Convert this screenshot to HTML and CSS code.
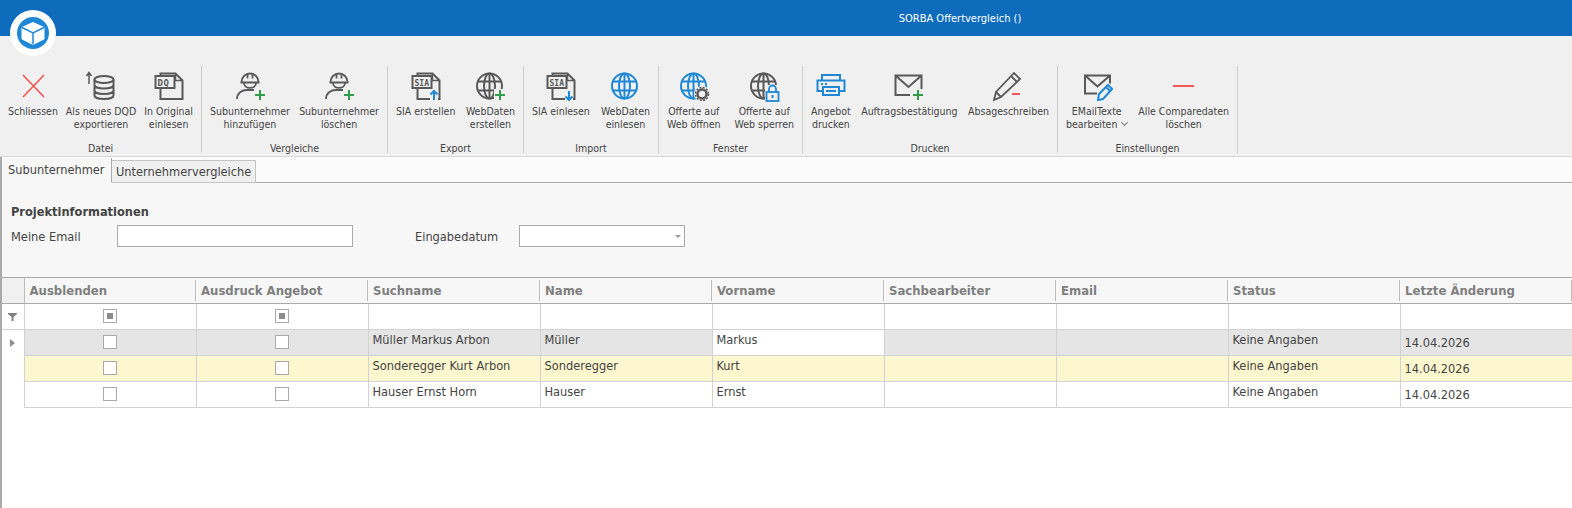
FILE: index.html
```html
<!DOCTYPE html>
<html lang="en">
<head>
    <meta charset="UTF-8">
    <meta name="viewport" content="width=device-width, initial-scale=1.0">
    <title>SORBA Offertvergleich</title>
    <link rel="stylesheet" href="styles.css">
</head>
<body>
    <svg class="defs" width="0" height="0">
        <symbol id="globe" viewBox="0 0 32 32">
            <g fill="none" stroke="currentColor" stroke-width="2">
                <circle cx="15.500" cy="16" r="12.500"/>
                <ellipse cx="15.500" cy="16" rx="5.500" ry="12.500"/>
                <path d="M15.500 3.500v25M4 11.500h23M4 20.500h23"/>
            </g>
        </symbol>
        <symbol id="doc" viewBox="0 0 32 32">
            <path d="M7.500 5V3.500h15l7 7V29h-22V18" fill="none" stroke="#595959" stroke-width="2"/>
            <path d="M22.500 3.500v7h7" fill="none" stroke="#595959" stroke-width="1.500"/>
            <rect x="2.500" y="6" width="19" height="12" fill="#f0f0f0" stroke="#595959" stroke-width="2"/>
        </symbol>
        <symbol id="worker" viewBox="0 0 32 32">
            <g fill="none" stroke="#595959" stroke-width="1.800">
                <path d="M7.500 12a8.500 8.500 0 0 1 17 0"/>
                <path d="M6.500 12.500h19M10 13c0 6.500 12 6.500 12 0M13.500 3.500v5M18.500 3.500v5"/>
                <path d="M3 29c0-6 5-9 10-9h7"/>
            </g>
        </symbol>
        <symbol id="plus" viewBox="0 0 10 10">
            <path d="M5 0v10M0 5h10" stroke="#2e9e4a" stroke-width="2"/>
        </symbol>
    </svg>

    <header class="titlebar">
        <span>SORBA Offertvergleich ()</span>
    </header>
    <div class="logo">
        <svg viewBox="0 0 46 46" width="46" height="46">
            <circle cx="23" cy="23" r="23" fill="#fff"/>
            <circle cx="23" cy="23" r="16" fill="#1e88d6"/>
            <path d="M23 12.500l11 5v11.500l-11 5.500-11-5.500V17.500z" fill="#fff" stroke="#fff" stroke-linejoin="round"/>
            <path d="M12 17.500l11 5.500 11-5.500M23 23v11.500" fill="none" stroke="#1e88d6" stroke-width="1.500"/>
        </svg>
    </div>

    <section class="ribbon">
        <div class="group g-datei">
            <div class="buttons">
                <div class="btn">
                    <svg class="ico" viewBox="0 0 32 32"><path d="M6 5l21 22M27 5L6 27" stroke="#f25555" stroke-width="1.600" fill="none"/></svg>
                    <span>Schliessen</span>
                </div>
                <div class="btn">
                    <svg class="ico" viewBox="0 0 32 32">
                        <g fill="none" stroke="#595959" stroke-width="2">
                            <ellipse cx="19" cy="9.500" rx="9.500" ry="3.500"/>
                            <path d="M9.500 9.500v16c0 2 4 3.500 9.500 3.500s9.500-1.500 9.500-3.500v-16M9.500 15c0 2 4 3.500 9.500 3.500s9.500-1.500 9.500-3.500M9.500 20.500c0 2 4 3.500 9.500 3.500s9.500-1.500 9.500-3.500"/>
                        </g>
                        <path d="M4 14V3M1.500 6L4 2.500 6.500 6" fill="none" stroke="#595959" stroke-width="1.500"/>
                    </svg>
                    <span>Als neues DQD<br>exportieren</span>
                </div>
                <div class="btn">
                    <svg class="ico" viewBox="0 0 32 32">
                        <use href="#doc"/>
                        <text x="4.500" y="15.500" class="ico-text dq">DQ</text>
                    </svg>
                    <span>In Original<br>einlesen</span>
                </div>
            </div>
            <div class="group-label">Datei</div>
        </div>

        <div class="group g-vergleiche">
            <div class="buttons">
                <div class="btn">
                    <svg class="ico" viewBox="0 0 32 32">
                        <use href="#worker"/>
                        <use href="#plus" x="21" y="20" width="10" height="10"/>
                    </svg>
                    <span>Subunternehmer<br>hinzufügen</span>
                </div>
                <div class="btn">
                    <svg class="ico" viewBox="0 0 32 32">
                        <use href="#worker"/>
                        <use href="#plus" x="21" y="20" width="10" height="10"/>
                    </svg>
                    <span>Subunternehmer<br>löschen</span>
                </div>
            </div>
            <div class="group-label">Vergleiche</div>
        </div>

        <div class="group g-export">
            <div class="buttons">
                <div class="btn">
                    <svg class="ico" viewBox="0 0 32 32">
                        <use href="#doc"/>
                        <text x="4.500" y="15.500" class="ico-text">SIA</text>
                        <rect x="20" y="20" width="8" height="11" fill="#f0f0f0"/>
                        <path d="M24 30v-9M20.500 24.500L24 21l3.500 3.500" fill="none" stroke="#1e88d6" stroke-width="2"/>
                    </svg>
                    <span>SIA erstellen</span>
                </div>
                <div class="btn">
                    <svg class="ico ico-grey" viewBox="0 0 32 32">
                        <use href="#globe"/>
                        <rect x="20" y="19" width="12" height="12" fill="#f0f0f0"/>
                        <use href="#plus" x="21" y="20" width="10" height="10"/>
                    </svg>
                    <span>WebDaten<br>erstellen</span>
                </div>
            </div>
            <div class="group-label">Export</div>
        </div>

        <div class="group g-import">
            <div class="buttons">
                <div class="btn">
                    <svg class="ico" viewBox="0 0 32 32">
                        <use href="#doc"/>
                        <text x="4.500" y="15.500" class="ico-text">SIA</text>
                        <rect x="20" y="20" width="8" height="11" fill="#f0f0f0"/>
                        <path d="M24 21v9M20.500 26.500L24 30l3.500-3.500" fill="none" stroke="#1e88d6" stroke-width="2"/>
                    </svg>
                    <span>SIA einlesen</span>
                </div>
                <div class="btn">
                    <svg class="ico ico-blue" viewBox="0 0 32 32"><use href="#globe"/></svg>
                    <span>WebDaten<br>einlesen</span>
                </div>
            </div>
            <div class="group-label">Import</div>
        </div>

        <div class="group g-fenster">
            <div class="buttons">
                <div class="btn">
                    <svg class="ico ico-blue" viewBox="0 0 32 32">
                        <use href="#globe"/>
                        <circle cx="24" cy="24" r="8" fill="#f0f0f0"/>
                        <circle cx="24" cy="24" r="4.500" fill="none" stroke="#595959" stroke-width="2.500"/>
                        <circle cx="24" cy="24" r="6.500" fill="none" stroke="#595959" stroke-width="1.500" stroke-dasharray="2 1.400"/>
                    </svg>
                    <span>Offerte auf<br>Web öffnen</span>
                </div>
                <div class="btn">
                    <svg class="ico ico-grey" viewBox="0 0 32 32">
                        <use href="#globe"/>
                        <rect x="17" y="15" width="15" height="17" fill="#f0f0f0"/>
                        <path d="M21 22v-3a3.500 3.500 0 0 1 7 0v3" fill="none" stroke="#1e88d6" stroke-width="1.800"/>
                        <rect x="18.500" y="22" width="12" height="9" fill="none" stroke="#1e88d6" stroke-width="1.800"/>
                        <path d="M24.500 25v3" stroke="#1e88d6" stroke-width="2"/>
                    </svg>
                    <span>Offerte auf<br>Web sperren</span>
                </div>
            </div>
            <div class="group-label">Fenster</div>
        </div>

        <div class="group g-drucken">
            <div class="buttons">
                <div class="btn">
                    <svg class="ico" viewBox="0 0 32 32">
                        <g fill="none" stroke="#1e88d6" stroke-width="2">
                            <path d="M7 10V5h18v5"/>
                            <path d="M8 21H2.500V10.500h27V21H24"/>
                            <rect x="8" y="17" width="16" height="8"/>
                            <path d="M11 21h10"/>
                        </g>
                        <path d="M6 14h2M10 14h2" stroke="#1e88d6" stroke-width="2"/>
                    </svg>
                    <span>Angebot<br>drucken</span>
                </div>
                <div class="btn">
                    <svg class="ico" viewBox="0 0 32 32">
                        <path d="M17 25H2.500V5.500h26V19M2.500 5.500l13 11.500 13-11.500" fill="none" stroke="#595959" stroke-width="2"/>
                        <use href="#plus" x="20" y="20" width="10" height="10"/>
                    </svg>
                    <span>Auftragsbestätigung</span>
                </div>
                <div class="btn">
                    <svg class="ico" viewBox="0 0 32 32">
                        <path d="M2 30l2-8L22 3l6 6L9 27zM4 22l5 5M19 6l6 6" fill="none" stroke="#595959" stroke-width="1.800"/>
                        <path d="M20 24h8" stroke="#f25555" stroke-width="2"/>
                    </svg>
                    <span>Absageschreiben</span>
                </div>
            </div>
            <div class="group-label">Drucken</div>
        </div>

        <div class="group g-einstellungen">
            <div class="buttons">
                <div class="btn">
                    <svg class="ico" viewBox="0 0 32 32">
                        <path d="M16 23.500H4V5.500h25v8M4 5.500l12.500 11L29 5.500" fill="none" stroke="#595959" stroke-width="2"/>
                        <path d="M17 30l1-6L27 15l4 4-9 10zM25 17l4 4" fill="#f0f0f0" stroke="#1e88d6" stroke-width="2"/>
                    </svg>
                    <span>EMailTexte<br>bearbeiten <i class="chev"></i></span>
                </div>
                <div class="btn">
                    <svg class="ico" viewBox="0 0 32 32"><path d="M5 16h21" stroke="#f25555" stroke-width="2"/></svg>
                    <span>Alle Comparedaten<br>löschen</span>
                </div>
            </div>
            <div class="group-label">Einstellungen</div>
        </div>
    </section>

    <main class="content">
        <nav class="tabs">
            <div class="tab active">Subunternehmer</div>
            <div class="tab">Unternehmervergleiche</div>
        </nav>

        <section class="project">
            <h4>Projektinformationen</h4>
            <div class="fields">
                <label class="lbl-mail">Meine Email</label>
                <div class="input mail"></div>
                <label class="lbl-date">Eingabedatum</label>
                <div class="input date"><i class="caret"></i></div>
            </div>
        </section>

        <table class="grid">
            <thead>
                <tr>
                    <th class="gutter"></th>
                    <th>Ausblenden</th>
                    <th>Ausdruck Angebot</th>
                    <th>Suchname</th>
                    <th>Name</th>
                    <th>Vorname</th>
                    <th>Sachbearbeiter</th>
                    <th>Email</th>
                    <th>Status</th>
                    <th>Letzte Änderung</th>
                </tr>
            </thead>
            <tbody>
                <tr class="filter">
                    <td class="gutter"><svg width="9" height="8" viewBox="0 0 9 8"><path d="M0 0h9v1L5.500 4v4h-2V4L0 1z" fill="#808080"/></svg></td>
                    <td class="chk"><span class="box mixed"></span></td>
                    <td class="chk"><span class="box mixed"></span></td>
                    <td></td><td></td><td></td><td></td><td></td><td></td><td></td>
                </tr>
                <tr class="selected">
                    <td class="gutter"><i class="row-arrow"></i></td>
                    <td class="chk"><span class="box"></span></td>
                    <td class="chk"><span class="box"></span></td>
                    <td>Müller Markus Arbon</td>
                    <td>Müller</td>
                    <td class="focus">Markus</td>
                    <td></td><td></td>
                    <td>Keine Angaben</td>
                    <td class="date-cell">14.04.2026</td>
                </tr>
                <tr class="marked">
                    <td class="gutter"></td>
                    <td class="chk"><span class="box"></span></td>
                    <td class="chk"><span class="box"></span></td>
                    <td>Sonderegger Kurt Arbon</td>
                    <td>Sonderegger</td>
                    <td>Kurt</td>
                    <td></td><td></td>
                    <td>Keine Angaben</td>
                    <td class="date-cell">14.04.2026</td>
                </tr>
                <tr>
                    <td class="gutter"></td>
                    <td class="chk"><span class="box"></span></td>
                    <td class="chk"><span class="box"></span></td>
                    <td>Hauser Ernst Horn</td>
                    <td>Hauser</td>
                    <td>Ernst</td>
                    <td></td><td></td>
                    <td>Keine Angaben</td>
                    <td class="date-cell">14.04.2026</td>
                </tr>
            </tbody>
        </table>
    </main>
</body>
</html>
```
FILE: styles.css
```css
html, body {
    margin: 0;
    height: 508px;
    overflow: hidden;
    background-color: #fff;
    font-family: "DejaVu Sans Condensed", "DejaVu Sans", sans-serif;
    color: #444;
}
.defs {
    position: absolute;
}
.titlebar {
    height: 36px;
    background-color: #0f6cbd;
    color: #fff;
    font-size: 11px;
    display: flex;
    align-items: center;
    justify-content: center;
    padding-left: 348px;
    box-sizing: border-box;
}
.logo {
    position: absolute;
    top: 10px;
    left: 10px;
    width: 46px;
    height: 46px;
}
.ribbon {
    height: 121px;
    background-color: #f0f0f0;
    border-bottom: 1px solid #d8d8d8;
    box-sizing: border-box;
    display: flex;
    padding-top: 30px;
    font-size: 10.5px;
}
.group {
    border-right: 1px solid #cfcfcf;
    display: flex;
    flex-direction: column;
    height: 87px;
    box-sizing: border-box;
    padding: 0 8px;
}
.g-datei { width: 202px; }
.g-vergleiche { width: 186px; }
.g-export { width: 136px; }
.g-import { width: 135px; }
.g-fenster { width: 144px; }
.g-drucken { width: 255px; }
.g-einstellungen { width: 180px; }
.buttons {
    display: flex;
    justify-content: space-between;
    flex: 1;
}
.btn {
    display: flex;
    flex-direction: column;
    align-items: center;
    text-align: center;
    line-height: 13px;
    white-space: nowrap;
    color: #444;
}
.ico {
    width: 32px;
    height: 32px;
    margin: 4px 0 3px;
    display: block;
}
.ico-grey { color: #595959; }
.ico-blue { color: #1e88d6; }
.ico-text {
    font-family: "DejaVu Sans Mono", monospace;
    font-size: 8px;
    font-weight: bold;
    fill: #595959;
}
.dq {
    font-size: 9px;
    letter-spacing: 0.5px;
}
.chev {
    display: inline-block;
    width: 4px;
    height: 4px;
    margin: 0 0 3px 2px;
    border-right: 1px solid #777;
    border-bottom: 1px solid #777;
    transform: rotate(45deg);
}
.group-label {
    text-align: center;
    line-height: 13px;
    margin-bottom: -2px;
}
.content {
    border-left: 2px solid #aaa;
    height: 351px;
    box-sizing: border-box;
}
.tabs {
    height: 26px;
    display: flex;
    align-items: flex-end;
    border-bottom: 1px solid #aaa;
    box-sizing: border-box;
    font-size: 12.700px;
    background-color: #fbfbfb;
}
.tab {
    height: 23px;
    line-height: 22px;
    padding: 0 4px;
    margin-bottom: -1px;
    border: 1px solid #c4c4c4;
    border-left: none;
    box-sizing: border-box;
    background-color: #f0f0f0;
}
.tab.active {
    height: 25px;
    width: 110px;
    padding-left: 6px;
    background-color: #f7f7f7;
    border-top: none;
    border-color: #aaa;
    border-bottom-color: #f7f7f7;
    position: relative;
    line-height: 24px;
}
.project {
    height: 94px;
    background-color: #f7f7f7;
    padding: 22px 0 0 9px;
    box-sizing: border-box;
    font-size: 12.700px;
}
.project h4 {
    margin: 0 0 6px;
    font-size: 12.700px;
    line-height: 14px;
    color: #444;
}
.fields {
    display: flex;
    align-items: center;
}
.lbl-mail { width: 106px; }
.lbl-date { width: 104px; }
.input {
    height: 22px;
    background-color: #fff;
    border: 1px solid #aaa;
    box-sizing: border-box;
    display: flex;
    align-items: center;
    justify-content: flex-end;
}
.mail {
    width: 236px;
    margin-right: 62px;
}
.date { width: 166px; }
.caret {
    margin-right: 3px;
    border: 3px solid transparent;
    border-top: 3px solid #999;
    border-bottom: none;
}
.grid {
    border-collapse: collapse;
    table-layout: fixed;
    width: 1570px;
    font-size: 12.700px;
}
.grid th, .grid td {
    width: 172px;
    box-sizing: border-box;
    overflow: hidden;
    white-space: nowrap;
    text-align: left;
    padding: 0 5px;
}
.grid th {
    height: 26px;
    background-color: #f7f7f7;
    border-top: 1px solid #aaa;
    border-bottom: 1px solid #aaa;
    color: #7f7f7f;
    font-size: 13px;
    font-weight: bold;
    background-image: linear-gradient(#bbb, #bbb);
    background-size: 1px 21px;
    background-position: right center;
    background-repeat: no-repeat;
}
.grid th.gutter, .grid td.gutter {
    width: 22px;
    padding: 0;
    text-align: center;
    border-left: none;
}
.grid th.gutter {
    background-image: none;
    background-color: #f0f0f0;
    border-right: 1px solid #bbb;
}
.grid td {
    height: 26px;
    border: 1px solid #d2d2d2;
    vertical-align: top;
    line-height: 18px;
    padding: 1px 4px 0;
    color: #444;
}
.grid td.gutter {
    border-top: none;
    border-bottom: none;
    vertical-align: middle;
    padding: 0;
    line-height: 0;
}
.filter td.gutter {
    border-bottom: 1px solid #d2d2d2;
}
.grid td.chk {
    text-align: center;
    vertical-align: middle;
    padding: 0;
    line-height: 0;
}
.grid td.date-cell {
    padding: 4px 0 0 4px;
}
.box {
    display: inline-flex;
    align-items: center;
    justify-content: center;
    width: 14px;
    height: 14px;
    margin-bottom: 2px;
    border: 1px solid #aaa;
    box-sizing: border-box;
    background-color: #fff;
}
.box.mixed::after {
    content: "";
    width: 6px;
    height: 6px;
    background-color: #8c8c8c;
}
.selected td:not(.gutter) {
    background-color: #e5e5e5;
}
.grid .selected td.focus {
    background-color: #fff;
}
.marked td:not(.gutter) {
    background-color: #fdf7cf;
}
.row-arrow {
    display: inline-block;
    border: 4px solid transparent;
    border-left: 5px solid #8c8c8c;
    border-right: none;
}
```
